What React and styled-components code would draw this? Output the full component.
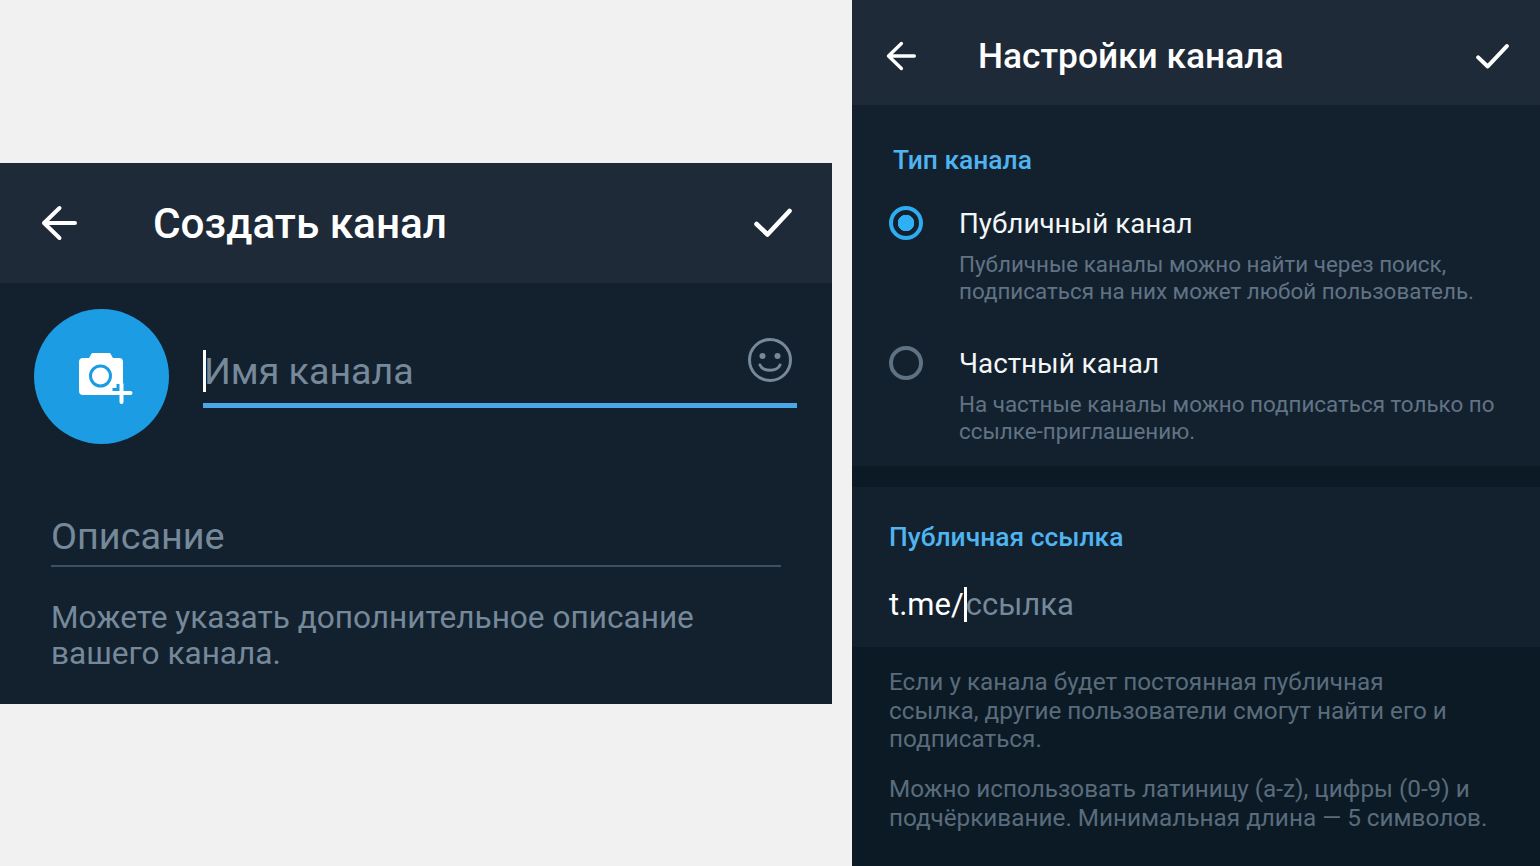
import React from "react";
import styled, { createGlobalStyle } from "styled-components";

const GlobalStyle = createGlobalStyle`
  html, body {
    margin: 0;
    padding: 0;
    background: #f1f1f1;
    font-family: Roboto, "Noto Sans", sans-serif;
  }
`;

const BackIcon = ({ size }) => (
  <svg width={size} height={size} viewBox="0 0 36 36" fill="none" stroke="#fff" strokeWidth="4" strokeLinecap="round" strokeLinejoin="round">
    <path d="M3 18h31M18.500 3L3 18l15.500 15" />
  </svg>
);

const CheckIcon = ({ size }) => (
  <svg width={size} height={size} viewBox="0 0 38 38" fill="none" stroke="#fff" strokeWidth="4.600" strokeLinecap="round" strokeLinejoin="round">
    <path d="M2.500 20L13.500 30.500 35.500 7" />
  </svg>
);

function App() {
  return (
    <Page>
      <GlobalStyle />
      <CreatePanel>
        <Header $height={120} $left={41} $gap={76} $right={40} $top={1}>
          <BackIcon size={36} />
          <BigTitle>Создать канал</BigTitle>
          <CheckIcon size={38} />
        </Header>
        <CreateBody>
          <NameRow>
            <Avatar>
              <svg width="66" height="66" viewBox="0 0 66 66">
                <path d="M14 15h6l3-5h18l3 5h6a4 4 0 0 1 4 4v29a4 4 0 0 1-4 4H14a4 4 0 0 1-4-4V19a4 4 0 0 1 4-4z" fill="#fff" />
                <circle cx="31.500" cy="33" r="10" fill="none" stroke="#1b9ce3" strokeWidth="3" />
                <path d="M43.500 50h18M52.500 41v18" stroke="#1b9ce3" strokeWidth="10" />
                <path d="M43.500 50h18M52.500 41v18" stroke="#fff" strokeWidth="4" strokeLinecap="round" />
              </svg>
            </Avatar>
            <NameField>
              <Caret $height={42} />
              <Placeholder>Имя канала</Placeholder>
              <Smile>
                <svg width="46" height="46" viewBox="0 0 46 46" fill="none" stroke="#76899a" strokeWidth="3">
                  <circle cx="23" cy="23" r="20.500" />
                  <circle cx="15.500" cy="19" r="3" fill="#76899a" stroke="none" />
                  <circle cx="30.500" cy="19" r="3" fill="#76899a" stroke="none" />
                  <path d="M13 28c3 7 17 7 20 0" strokeLinecap="round" />
                </svg>
              </Smile>
            </NameField>
          </NameRow>
          <DescriptionField>Описание</DescriptionField>
          <Hint>Можете указать дополнительное описание вашего канала.</Hint>
        </CreateBody>
      </CreatePanel>

      <SettingsPanel>
        <Header $height={105} $left={34} $gap={62} $right={31} $top={7}>
          <BackIcon size={30} />
          <MidTitle>Настройки канала</MidTitle>
          <CheckIcon size={33} />
        </Header>
        <TypeSection>
          <SectionLabel $left={41}>Тип канала</SectionLabel>
          <RadioRow>
            <Radio $checked />
            <RadioText>
              <RadioTitle>Публичный канал</RadioTitle>
              <RadioNote>Публичные каналы можно найти через поиск, подписаться на них может любой пользователь.</RadioNote>
            </RadioText>
          </RadioRow>
          <RadioRow>
            <Radio />
            <RadioText>
              <RadioTitle>Частный канал</RadioTitle>
              <RadioNote>На частные каналы можно подписаться только по ссылке-приглашению.</RadioNote>
            </RadioText>
          </RadioRow>
        </TypeSection>
        <LinkSection>
          <SectionLabel $left={37}>Публичная ссылка</SectionLabel>
          <LinkRow>
            <span>t.me/</span>
            <Caret $height={35} />
            <LinkPlaceholder>ссылка</LinkPlaceholder>
          </LinkRow>
        </LinkSection>
        <Footer>
          <FooterText $width={570}>Если у канала будет постоянная публичная ссылка, другие пользователи смогут найти его и подписаться.</FooterText>
          <FooterText $width={610}>Можно использовать латиницу (a-z), цифры (0-9) и подчёркивание. Минимальная длина — 5 символов.</FooterText>
        </Footer>
      </SettingsPanel>
    </Page>
  );
}

const Page = styled.div`
  width: 1540px;
  height: 866px;
  display: flex;
  align-items: center;
  gap: 20px;
  overflow: hidden;
`;

const CreatePanel = styled.section`
  width: 832px;
  height: 541px;
  flex-shrink: 0;
  background: #13212f;
`;

const SettingsPanel = styled.section`
  width: 688px;
  height: 866px;
  flex-shrink: 0;
  display: flex;
  flex-direction: column;
  background: #0c1a25;
`;

const Header = styled.header`
  height: ${(p) => p.$height}px;
  flex-shrink: 0;
  box-sizing: border-box;
  display: flex;
  align-items: center;
  gap: ${(p) => p.$gap}px;
  padding: ${(p) => p.$top}px ${(p) => p.$right}px 0 ${(p) => p.$left}px;
  background: #1e2a38;
  svg:last-child {
    margin-left: auto;
  }
`;

const BigTitle = styled.h1`
  margin: 0;
  color: #fff;
  font-size: 42.3px;
  font-weight: 500;
`;

const MidTitle = styled.h1`
  margin: 0;
  color: #fff;
  font-size: 35.3px;
  font-weight: 500;
`;

const CreateBody = styled.div`
  padding: 26px 35px 0 34px;
`;

const NameRow = styled.div`
  display: flex;
  gap: 34px;
`;

const Avatar = styled.div`
  width: 135px;
  height: 135px;
  flex-shrink: 0;
  display: flex;
  align-items: center;
  justify-content: center;
  border-radius: 50%;
  background: #1b9ce3;
`;

const NameField = styled.div`
  flex: 1;
  height: 99px;
  display: flex;
  align-items: center;
  border-bottom: 5px solid #4ba7e6;
  box-sizing: border-box;
  padding-top: 30px;
`;

const Caret = styled.i`
  width: 3px;
  height: ${(p) => p.$height}px;
  flex-shrink: 0;
  background: #fff;
`;

const Placeholder = styled.span`
  color: #76899a;
  font-size: 37.6px;
  margin-left: -2px;
`;

const Smile = styled.span`
  margin: -22px 4px 0 auto;
  height: 46px;
`;

const DescriptionField = styled.div`
  margin: 53px 16px 0 17px;
  height: 70px;
  box-sizing: border-box;
  padding-top: 17px;
  border-bottom: 2px solid #3b5166;
  color: #76899a;
  font-size: 37.8px;
  line-height: 44px;
`;

const Hint = styled.p`
  margin: 33px 17px 0;
  max-width: 690px;
  color: #76899a;
  font-size: 31.6px;
  line-height: 36px;
`;

const TypeSection = styled.div`
  height: 361px;
  flex-shrink: 0;
  box-sizing: border-box;
  padding-top: 39px;
  background: #13212f;
`;

const SectionLabel = styled.div`
  padding-left: ${(p) => p.$left}px;
  color: #4fb4f0;
  font-size: 26.4px;
  font-weight: 500;
  line-height: 32px;
`;

const RadioRow = styled.div`
  display: flex;
  gap: 36px;
  padding-left: 37px;
  margin-top: 31px;
  & + & {
    margin-top: 42px;
  }
`;

const Radio = styled.span`
  width: 34px;
  height: 34px;
  margin-top: -1px;
  flex-shrink: 0;
  box-sizing: border-box;
  border-radius: 50%;
  border: 4px solid ${(p) => (p.$checked ? "#2fabf0" : "#5f7283")};
  background: ${(p) => (p.$checked ? "radial-gradient(circle, #2fb0f5 0 8px, transparent 8.5px)" : "transparent")};
`;

const RadioText = styled.div`
  display: flex;
  flex-direction: column;
`;

const RadioTitle = styled.div`
  color: #f4f6f7;
  font-size: 27.8px;
  line-height: 34px;
`;

const RadioNote = styled.div`
  margin-top: 10px;
  width: 545px;
  color: #617384;
  font-size: 22.4px;
  line-height: 27px;
`;

const LinkSection = styled.div`
  margin-top: 21px;
  height: 160px;
  flex-shrink: 0;
  box-sizing: border-box;
  padding-top: 34px;
  background: #13212f;
`;

const LinkRow = styled.div`
  display: flex;
  align-items: center;
  margin: 31px 0 0 37px;
  height: 40px;
  color: #fff;
  font-size: 31px;
`;

const LinkPlaceholder = styled.span`
  color: #76899a;
  margin-left: -1px;
`;

const Footer = styled.div`
  padding: 21px 37px 0;
`;

const FooterText = styled.p`
  margin: 0 0 21px;
  width: ${(p) => p.$width}px;
  color: #5a6c7c;
  font-size: 24.3px;
  line-height: 28.7px;
`;

export default App;
